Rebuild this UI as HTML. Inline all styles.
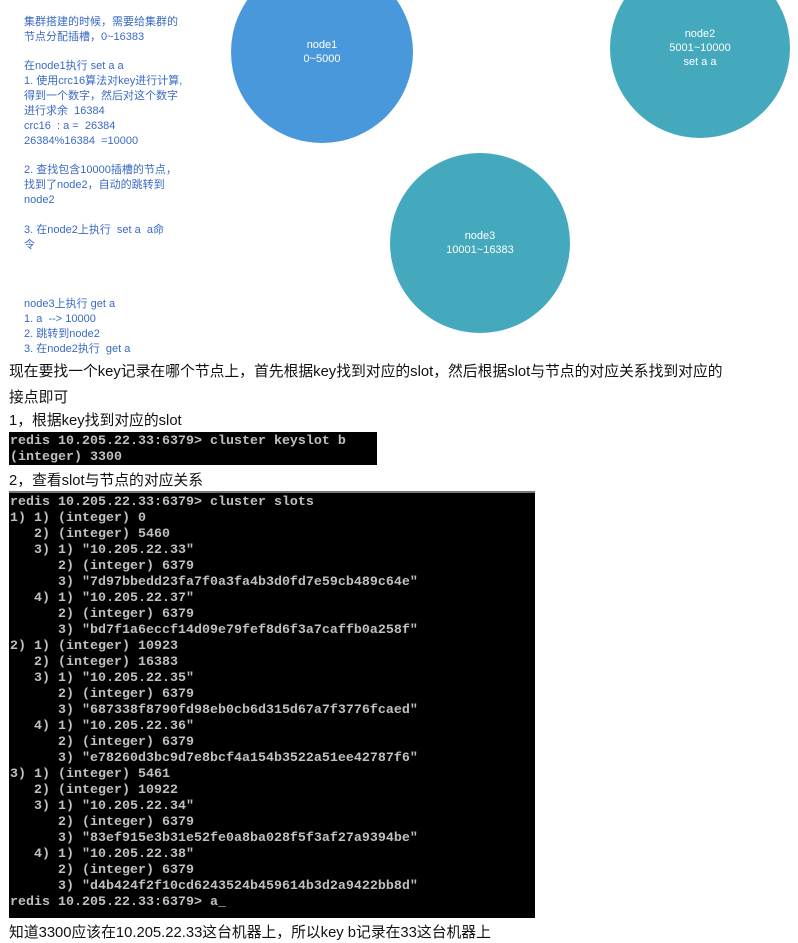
<!DOCTYPE html>
<html><head><meta charset="utf-8"><style>
body{margin:0;width:798px;height:943px;background:#fff;position:relative;overflow:hidden;font-family:"Liberation Sans","Noto Sans CJK SC",sans-serif}
.n{position:absolute;left:24px;font-size:11px;color:#3a6ac4;line-height:14px;height:14px;white-space:pre}
.c{position:absolute;border-radius:50%;color:#fff;font-size:11px;text-align:center;display:flex;align-items:center;justify-content:center;line-height:14px}
.t{position:absolute;left:9px;font-size:14.8px;color:#111;white-space:nowrap}
.term{position:absolute;left:9px;background:#000;color:#c0c0c0;font-family:"Liberation Mono",monospace;font-weight:bold;font-size:13.33px;line-height:16px;white-space:pre;padding:2px 0 0 1px;box-sizing:border-box}
</style></head><body>
<div class="c" style="left:231px;top:-39px;width:182px;height:182px;background:#4a98dc">node1<br>0~5000</div>
<div class="c" style="left:610px;top:-42px;width:180px;height:180px;background:#44a9bd">node2<br>5001~10000<br>set a a</div>
<div class="c" style="left:390px;top:153px;width:180px;height:180px;background:#44a9bd">node3<br>10001~16383</div>
<div class="n" style="top:15px">集群搭建的时候，需要给集群的</div>
<div class="n" style="top:30px">节点分配插槽，0~16383</div>
<div class="n" style="top:59px">在node1执行 set a a</div>
<div class="n" style="top:74px">1. 使用crc16算法对key进行计算,</div>
<div class="n" style="top:89px">得到一个数字，然后对这个数字</div>
<div class="n" style="top:104px">进行求余  16384</div>
<div class="n" style="top:119px">crc16  : a =  26384</div>
<div class="n" style="top:134px">26384%16384  =10000</div>
<div class="n" style="top:163px">2. 查找包含10000插槽的节点，</div>
<div class="n" style="top:178px">找到了node2，自动的跳转到</div>
<div class="n" style="top:193px">node2</div>
<div class="n" style="top:223px">3. 在node2上执行  set a  a命</div>
<div class="n" style="top:238px">令</div>
<div class="n" style="top:297px">node3上执行 get a</div>
<div class="n" style="top:312px">1. a  --&gt; 10000</div>
<div class="n" style="top:327px">2. 跳转到node2</div>
<div class="n" style="top:342px">3. 在node2执行  get a</div>
<div class="t" style="top:360px">现在要找一个key记录在哪个节点上，首先根据key找到对应的slot，然后根据slot与节点的对应关系找到对应的</div>
<div class="t" style="top:386px">接点即可</div>
<div class="t" style="top:409px">1，根据key找到对应的slot</div>
<div class="term" style="top:432px;width:368px;height:33px">redis 10.205.22.33:6379> cluster keyslot b
(integer) 3300</div>
<div class="t" style="top:469px">2，查看slot与节点的对应关系</div>
<div class="term" style="top:491px;width:526px;height:427px;border-top:2px solid #777">redis 10.205.22.33:6379> cluster slots
1) 1) (integer) 0
   2) (integer) 5460
   3) 1) "10.205.22.33"
      2) (integer) 6379
      3) "7d97bbedd23fa7f0a3fa4b3d0fd7e59cb489c64e"
   4) 1) "10.205.22.37"
      2) (integer) 6379
      3) "bd7f1a6eccf14d09e79fef8d6f3a7caffb0a258f"
2) 1) (integer) 10923
   2) (integer) 16383
   3) 1) "10.205.22.35"
      2) (integer) 6379
      3) "687338f8790fd98eb0cb6d315d67a7f3776fcaed"
   4) 1) "10.205.22.36"
      2) (integer) 6379
      3) "e78260d3bc9d7e8bcf4a154b3522a51ee42787f6"
3) 1) (integer) 5461
   2) (integer) 10922
   3) 1) "10.205.22.34"
      2) (integer) 6379
      3) "83ef915e3b31e52fe0a8ba028f5f3af27a9394be"
   4) 1) "10.205.22.38"
      2) (integer) 6379
      3) "d4b424f2f10cd6243524b459614b3d2a9422bb8d"
redis 10.205.22.33:6379> a_</div>
<div class="t" style="top:921px">知道3300应该在10.205.22.33这台机器上，所以key b记录在33这台机器上</div>
</body></html>
